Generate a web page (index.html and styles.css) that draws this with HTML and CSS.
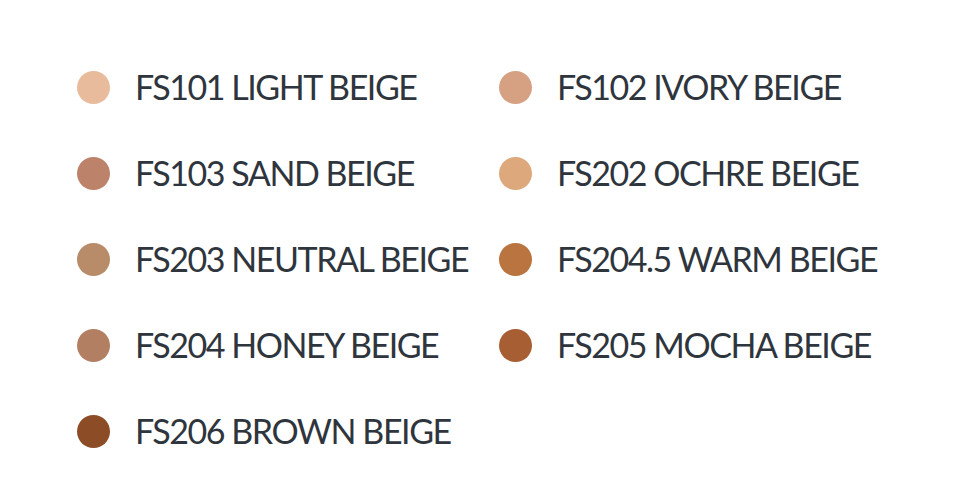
FILE: index.html
```html
<!DOCTYPE html>
<html lang="en">
<head>
<meta charset="utf-8">
<title>Shades</title>
<link rel="stylesheet" href="styles.css">
</head>
<body>
<ul class="shades">
  <li class="shade"><span class="dot dot-101"></span><span class="name">FS101 LIGHT BEIGE</span></li>
  <li class="shade"><span class="dot dot-102"></span><span class="name">FS102 IVORY BEIGE</span></li>
  <li class="shade"><span class="dot dot-103"></span><span class="name">FS103 SAND BEIGE</span></li>
  <li class="shade"><span class="dot dot-202"></span><span class="name">FS202 OCHRE BEIGE</span></li>
  <li class="shade"><span class="dot dot-203"></span><span class="name">FS203 NEUTRAL BEIGE</span></li>
  <li class="shade"><span class="dot dot-2045"></span><span class="name">FS204.5 WARM BEIGE</span></li>
  <li class="shade"><span class="dot dot-204"></span><span class="name">FS204 HONEY BEIGE</span></li>
  <li class="shade"><span class="dot dot-205"></span><span class="name">FS205 MOCHA BEIGE</span></li>
  <li class="shade"><span class="dot dot-206"></span><span class="name">FS206 BROWN BEIGE</span></li>
</ul>
</body>
</html>
```
FILE: styles.css
```css
html, body {
  margin: 0;
  padding: 0;
  background: #ffffff;
}
body {
  width: 964px;
  height: 504px;
  overflow: hidden;
  font-family: Lato, "Liberation Sans", sans-serif;
}
.shades {
  list-style: none;
  margin: 0;
  padding: 44px 0 0 77px;
  display: grid;
  grid-template-columns: 422px 422px;
  grid-auto-rows: 86px;
}
.shade {
  display: flex;
  align-items: center;
  gap: 25px;
}
.dot {
  flex: none;
  width: 33px;
  height: 33px;
  border-radius: 50%;
}
.name {
  font-size: 34px;
  font-weight: 400;
  letter-spacing: -1.45px;
  color: #2f353d;
  white-space: nowrap;
  line-height: 1;
}
.dot-101 { background: #e8bb9c; }
.dot-102 { background: #d6a183; }
.dot-103 { background: #bd836a; }
.dot-202 { background: #dda87c; }
.dot-203 { background: #b98c69; }
.dot-2045 { background: #b9743f; }
.dot-204 { background: #b37f62; }
.dot-205 { background: #a85e33; }
.dot-206 { background: #8b4c26; }
```
